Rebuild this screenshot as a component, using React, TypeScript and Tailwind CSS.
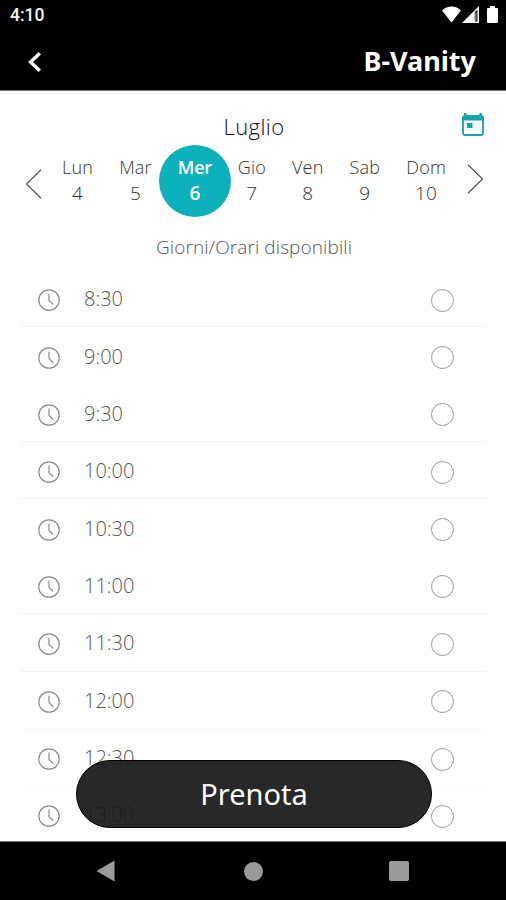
import { useState } from "react";

const DAYS = [
  { name: "Lun", num: 4 },
  { name: "Mar", num: 5 },
  { name: "Mer", num: 6 },
  { name: "Gio", num: 7 },
  { name: "Ven", num: 8 },
  { name: "Sab", num: 9 },
  { name: "Dom", num: 10 },
];

const SLOTS = [
  { time: "8:30", line: "border-[#f5f5f5]" },
  { time: "9:00", line: "border-transparent" },
  { time: "9:30", line: "border-[#f5f5f5]" },
  { time: "10:00", line: "border-[#f3f3f3]" },
  { time: "10:30", line: "border-[#fcfcfc]" },
  { time: "11:00", line: "border-[#f3f3f3]" },
  { time: "11:30", line: "border-[#f5f5f5]" },
  { time: "12:00", line: "border-[#fafafa]" },
  { time: "12:30", line: "border-[#fafafa]" },
  { time: "13:00", line: "border-transparent" },
];

function StatusBar() {
  return (
    <div className="flex h-8 items-center justify-between pl-[10px] pr-[8px]">
      <span className="font-['Roboto',sans-serif] text-[17.500px] font-medium leading-none text-[#f2f2f2]">4:10</span>
      <div className="-mt-[3px] flex items-start text-white">
        <svg width="19" height="17" viewBox="0 0 19 17" fill="currentColor">
          <path d="M0 4.400C5.300-.8 13.700-.8 19 4.400L9.500 16.500z" />
        </svg>
        <svg className="ml-px" width="17" height="17" viewBox="0 0 17 17">
          <path d="M0 17 17 0v17z" fill="currentColor" />
          <path d="M12.700 6.300 15.500 3.500v12h-2.800z" fill="#222" />
          <path d="M13.800 7v8" stroke="#aaa" strokeWidth="1" />
        </svg>
        <svg className="ml-[8px]" width="11" height="17" viewBox="0 0 11 17" fill="currentColor">
          <path d="M3 0h5v2h2a1 1 0 0 1 1 1v13a1 1 0 0 1-1 1H1a1 1 0 0 1-1-1V3a1 1 0 0 1 1-1h2z" />
        </svg>
      </div>
    </div>
  );
}

function CalendarIcon() {
  return (
    <svg width="22" height="24" viewBox="0 0 22 24">
      <path d="M3 3h16a2 2 0 0 1 2 2v15a2 2 0 0 1-2 2H3a2 2 0 0 1-2-2V5a2 2 0 0 1 2-2z" fill="none" stroke="#17a4ad" strokeWidth="1.800" />
      <path d="M0 7.500V4.500l2-2V0h2.500v2.300h13V0H20v2.500l2 2v3z" fill="#17a4ad" />
      <path d="M5 10h5.500v5H5z" fill="#17a4ad" />
    </svg>
  );
}

function ClockIcon() {
  return (
    <svg width="22" height="22" viewBox="0 0 22 22" fill="none" stroke="#8c8c8c" strokeWidth="1.200">
      <circle cx="11" cy="11" r="10.200" />
      <path d="M11 4.600v6.900l4.200 4" />
    </svg>
  );
}

export default function App() {
  const [day, setDay] = useState(6);
  const [slot, setSlot] = useState("");

  return (
    <div className="flex h-[900px] w-[506px] flex-col overflow-hidden bg-white font-['Open_Sans','Noto_Sans',sans-serif]">
      <header className="h-[91px] shrink-0 border-b border-[#777] bg-black">
        <StatusBar />
        <div className="flex h-[58px] items-center justify-between pl-[28px] pr-[30px]">
          <button type="button" aria-label="Indietro" className="mt-[2px]">
            <svg width="14" height="20" viewBox="0 0 14 20" fill="none" stroke="white" strokeWidth="3.400">
              <path d="M11.800 1.200 2.600 10l9.200 8.800" />
            </svg>
          </button>
          <h1 className="-mt-[2px] font-['Noto_Sans',sans-serif] text-[27px] font-bold leading-none text-white">B-Vanity</h1>
        </div>
      </header>

      <main className="relative h-[750px] shrink-0 overflow-hidden">
        <div className="grid h-[54px] grid-cols-[1fr_auto_1fr] items-start pl-[24px] pr-[22px]">
          <h2 className="col-start-2 pt-[20px] text-[22px] font-light leading-[30px] tracking-[0.400px] text-[#111]">
            Luglio
          </h2>
          <button type="button" aria-label="Calendario" className="mt-[22px] justify-self-end">
            <CalendarIcon />
          </button>
        </div>

        <div className="flex h-[72px] items-center pl-[25px] pr-[22px]">
          <svg className="mt-[5px] shrink-0" width="17" height="30" viewBox="0 0 17 30" fill="none" stroke="#555" strokeWidth="1.200">
            <path d="M16 .8 1.500 15 16 29.200" />
          </svg>
          <div className="ml-[20px] flex w-[384px] justify-between">
            {DAYS.map((d) => (
              <button
                key={d.num}
                type="button"
                onClick={() => setDay(d.num)}
                className={`relative flex h-[72px] flex-col items-center pt-[9px] text-[18px] leading-[26px] ${
                  d.num === day ? "font-semibold tracking-[-0.300px] text-white" : "font-light tracking-[0.200px] text-[#333]"
                }`}
              >
                {d.num === day && (
                  <span className="absolute left-1/2 top-0 size-[72px] -translate-x-1/2 rounded-full bg-[#0bb1bb]" />
                )}
                <span className="relative">{d.name}</span>
                <span className="relative text-[19px]">{d.num}</span>
              </button>
            ))}
          </div>
          <svg className="-mt-[4px] ml-auto shrink-0" width="17" height="30" viewBox="0 0 17 30" fill="none" stroke="#555" strokeWidth="1.200">
            <path d="M1 .8 15.500 15 1 29.200" />
          </svg>
        </div>

        <p className="h-[53px] pl-[2px] pt-[17px] text-center text-[19px] font-light leading-[26px] tracking-[0.100px] text-[#555]">
          Giorni/Orari disponibili
        </p>

        <ul className="px-[20px]">
          {SLOTS.map((s) => (
            <li key={s.time} className={`flex h-[57.370px] items-center border-b pl-[18px] pr-[32px] ${s.line}`}>
              <span className="mt-[4px]">
                <ClockIcon />
              </span>
              <span className="ml-[24px] mt-[2px] text-[20px] font-light leading-none text-[#555]">{s.time}</span>
              <button
                type="button"
                aria-label={s.time}
                onClick={() => setSlot(s.time)}
                className={`ml-auto mt-[4px] size-[23px] rounded-full border border-[#999] ${
                  slot === s.time ? "bg-[#0bb1bb]" : ""
                }`}
              />
            </li>
          ))}
        </ul>

        <button
          type="button"
          className="absolute left-[76px] top-[669px] h-[68px] w-[356px] rounded-full border-[1.500px] border-black bg-[#181818]/93 pb-[2px] font-['Noto_Sans',sans-serif] text-[29px] leading-none text-white"
        >
          Prenota
        </button>
      </main>

      <nav className="flex grow items-center justify-between border-t border-[#777] bg-black pl-[96px] pr-[97px]">
        <svg width="19" height="22" viewBox="0 0 19 22">
          <path d="M18.500.5v21L.5 11z" fill="#9a9a9a" />
        </svg>
        <span className="ml-[2px] size-[19px] rounded-full bg-[#9a9a9a]" />
        <span className="size-[20px] rounded-[2px] bg-[#9a9a9a]" />
      </nav>
    </div>
  );
}
